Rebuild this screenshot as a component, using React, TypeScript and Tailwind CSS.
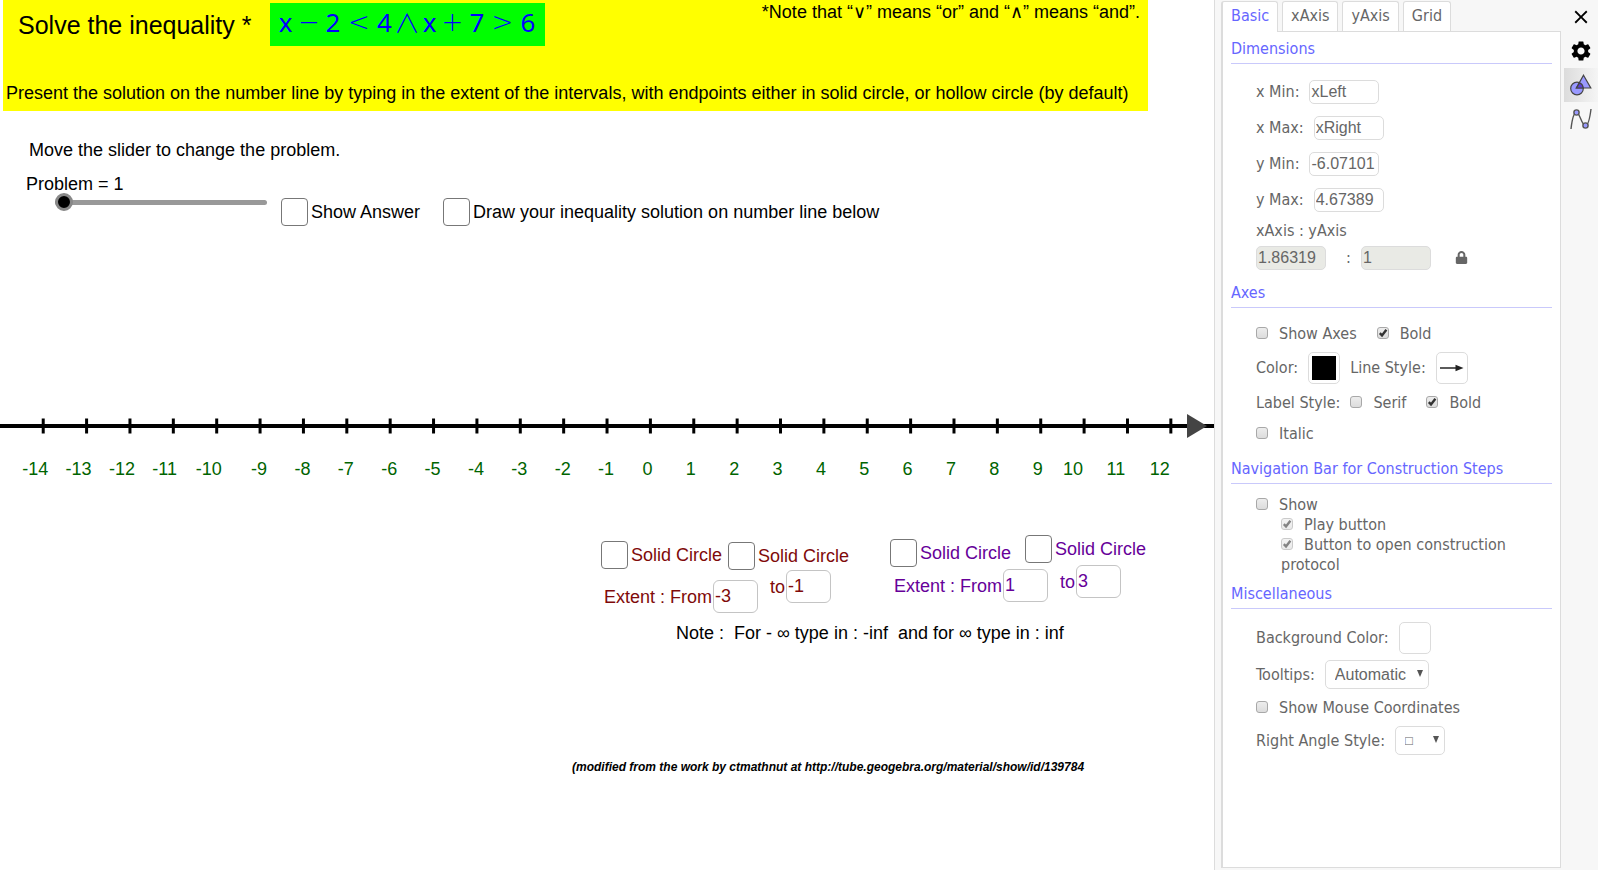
import React, { useState } from 'react';
import { MdClose, MdSettings } from 'react-icons/md';
import { FaLock } from 'react-icons/fa';

const TICKS = Array.from({ length: 27 }, (_, i) => i - 14);

const tickX = (n: number) => 650.4 + n * 43.37;

// two-digit labels start further left of their tick
const labelX = (n: number) => {
  if (Math.abs(n) >= 10) return tickX(n) - 21;
  return tickX(n) - (n < 0 ? 9 : 8);
};

const TABS = ['Basic', 'xAxis', 'yAxis', 'Grid'];

interface BigCheckProps {
  label: string;
  className?: string;
}

const BigCheck: React.FC<BigCheckProps> = ({ label, className }) => (
  <label className={`absolute flex items-center gap-[3px] whitespace-nowrap ${className}`}>
    <input
      type="checkbox"
      className="h-7 w-[27px] appearance-none rounded-[4px] border border-[#777] bg-white checked:bg-[#777]"
    />
    {label}
  </label>
);

interface ExtentProps {
  label: string;
  value: string;
  className?: string;
}

const Extent: React.FC<ExtentProps> = ({ label, value, className }) => (
  <label className={`absolute flex items-center gap-px whitespace-nowrap ${className}`}>
    {label}
    <input
      type="text"
      defaultValue={value}
      className="h-[33px] w-[45px] rounded-[6px] border border-[#c4c4c4] bg-white pl-px"
    />
  </label>
);

const NumberLine = () => (
  <svg className="absolute left-0 top-[410px] h-[80px] w-full" role="img" aria-label="Number line">
    <line x1="0" y1="16" x2="100%" y2="16" stroke="#000" strokeWidth="4" />
    {TICKS.map((n) => (
      <g key={n}>
        <line x1={tickX(n)} y1="8.5" x2={tickX(n)} y2="23.5" stroke="#000" strokeWidth="3" />
        <text x={labelX(n)} y="65" fill="#006400">{n}</text>
      </g>
    ))}
    <path d="M1187 4 L1207 16 L1187 28 Z" fill="#444" />
  </svg>
);

const OPERATORS = ['−', '<', '+', '>'];

const FORMULA: [string, string][] = [
  ['x', 'w-[13px]'],
  ['−', 'w-[34px]'],
  ['2', 'w-[14px]'],
  ['<', 'w-[38px]'],
  ['4', 'w-[13px]'],
  ['∧', 'w-[32px]'],
  ['x', 'w-[13px]'],
  ['+', 'w-[33px]'],
  ['7', 'w-[16px]'],
  ['>', 'w-[35px]'],
  ['6', 'w-[16px]'],
];

const symbolFont = (s: string) => {
  if (s === '∧') return "font-['Noto_Sans_CJK_JP',sans-serif] font-light";
  if (OPERATORS.includes(s)) return "font-['DejaVu_Sans_Light','DejaVu_Sans',sans-serif] font-extralight";
  return '';
};

const Banner = () => (
  <header className="relative ml-[3px] mr-[66px] flex h-[111px] flex-col justify-between bg-[#ffff00] pb-[6px] pl-[3px]">
    <div className="flex items-start justify-between pr-2">
      <div className="flex">
        <h1 className="w-[264px] pl-3 pt-[10px] text-[25px] leading-[30px]">Solve the inequality *</h1>
        <p className="mt-[3px] flex h-[43px] bg-[#00ff00] px-[9px] font-['Noto_Sans',sans-serif] text-[26px] leading-[38px] text-[#0000ff]">
          {FORMULA.map(([s, w], i) => (
            <span key={i} className={`${w} flex justify-center ${symbolFont(s)}`}>{s}</span>
          ))}
        </p>
      </div>
      <p>*Note that “∨” means “or” and “∧” means “and”.</p>
    </div>
    <p className="whitespace-nowrap">
      Present the solution on the number line by typing in the extent of the intervals, with endpoints either in solid circle, or hollow circle (by default)
    </p>
  </header>
);

const GraphicsView = () => {
  const [problem, setProblem] = useState(1);

  return (
    <main className="relative min-w-0 flex-1 overflow-hidden border-r border-[#dcdcdc] bg-white font-['Liberation_Sans',Arial,sans-serif] text-[18px] leading-6 text-black">
      <Banner />

      <p className="absolute left-[29px] top-[138px]">Move the slider to change the problem.</p>
      <label htmlFor="problem" className="absolute left-[26px] top-[172px]">Problem = {problem}</label>
      <input
        id="problem"
        type="range"
        min={1}
        max={10}
        value={problem}
        onChange={(e) => setProblem(Number(e.target.value))}
        className="absolute left-[55px] top-[193px] h-[18px] w-[212px] appearance-none bg-transparent [&::-webkit-slider-runnable-track]:h-[5px] [&::-webkit-slider-runnable-track]:rounded-full [&::-webkit-slider-runnable-track]:bg-[#999] [&::-webkit-slider-thumb]:-mt-[7px] [&::-webkit-slider-thumb]:size-[18px] [&::-webkit-slider-thumb]:appearance-none [&::-webkit-slider-thumb]:rounded-full [&::-webkit-slider-thumb]:border-3 [&::-webkit-slider-thumb]:border-[#888] [&::-webkit-slider-thumb]:bg-black"
      />
      <BigCheck label="Show Answer" className="left-[281px] top-[198px]" />
      <BigCheck label="Draw your inequality solution on number line below" className="left-[443px] top-[198px]" />

      <NumberLine />

      {/* first interval */}
      <BigCheck label="Solid Circle" className="left-[601px] top-[541px] text-[#7f0a0a]" />
      <BigCheck label="Solid Circle" className="left-[728px] top-[542px] text-[#7f0a0a]" />
      <Extent label="Extent : From" value="-3" className="left-[604px] top-[580px] text-[#7f0a0a]" />
      <Extent label="to" value="-1" className="left-[770px] top-[570px] text-[#7f0a0a]" />

      {/* second interval */}
      <BigCheck label="Solid Circle" className="left-[890px] top-[539px] text-[#660099]" />
      <BigCheck label="Solid Circle" className="left-[1025px] top-[535px] text-[#660099]" />
      <Extent label="Extent : From" value="1" className="left-[894px] top-[569px] text-[#660099]" />
      <Extent label="to" value="3" className="left-[1060px] top-[565px] text-[#660099]" />

      <p className="absolute left-[676px] top-[621px] whitespace-pre">{'Note :  For - ∞ type in : -inf  and for ∞ type in : inf'}</p>
      <p className="absolute left-[572px] top-[755px] whitespace-nowrap text-[12px] font-bold italic">
        (modified from the work by ctmathnut at http://tube.geogebra.org/material/show/id/139784
      </p>
    </main>
  );
};

interface CheckProps {
  label: string;
  checked?: boolean;
  disabled?: boolean;
}

const Check: React.FC<CheckProps> = ({ label, checked, disabled }) => (
  <label>
    <span className={`relative mr-[11px] inline-block size-3 ${disabled ? 'opacity-60' : ''}`}>
      <input
        type="checkbox"
        defaultChecked={checked}
        disabled={disabled}
        className="peer block size-3 appearance-none rounded-[3px] border border-[#a8a8a8] bg-linear-to-b from-[#ededed] to-[#dcdcdc]"
      />
      <svg viewBox="0 0 12 12" className="pointer-events-none absolute inset-0 hidden size-3 peer-checked:block">
        <path d="M2.8 6.2 L5 8.4 L9.4 2.8" fill="none" stroke="#333" strokeWidth="2.4" />
      </svg>
    </span>
    {label}
  </label>
);

interface FieldProps {
  label: string;
  value: string;
}

const Field: React.FC<FieldProps> = ({ label, value }) => (
  <label className="flex h-6 items-center gap-[10px]">
    {label}
    <input
      type="text"
      defaultValue={value}
      className="h-6 w-[70px] rounded-[5px] border border-[#dcdcdc] pl-px font-['Liberation_Sans',Arial,sans-serif]"
    />
  </label>
);

const Heading = ({ children }: { children: React.ReactNode }) => (
  <h2 className="h-[26px] border-b border-[#c9c9fb] leading-[22px] text-[#6666ff]">{children}</h2>
);

const DropArrow = () => (
  <svg viewBox="0 0 6 7" className="pointer-events-none absolute right-[6px] top-[10px] h-[7px] w-[6px] fill-[#555]">
    <path d="M0 0 H6 L3 7 Z" />
  </svg>
);

const SELECT = "h-[29px] appearance-none rounded-[5px] border border-[#dcdcdc] bg-white pl-[9px] font-['Liberation_Sans',Arial,sans-serif]";

const SettingsPanel = () => {
  const [tab, setTab] = useState('Basic');

  return (
    <aside className="flex w-[340px] shrink-0 flex-col pb-[2px] pt-px">
      <div role="tablist" className="flex h-[30px] gap-1">
        {TABS.map((t) => (
          <button
            key={t}
            role="tab"
            aria-selected={t === tab}
            onClick={() => setTab(t)}
            className={`rounded-t-[3px] border-x border-t border-[#dcdcdc] bg-white px-2 ${t === tab ? 'relative z-10 -mb-px border-l-2 pb-[3px] text-[#6666ff]' : 'pb-[2px]'}`}
          >
            {t}
          </button>
        ))}
      </div>

      <div className="flex-1 border border-l-2 border-[#dcdcdc] bg-white px-2 pt-[6px]">
        <Heading>Dimensions</Heading>
        <div className="mt-4 flex flex-col gap-3 pl-[25px]">
          <Field label="x Min:" value="xLeft" />
          <Field label="x Max:" value="xRight" />
          <Field label="y Min:" value="-6.07101" />
          <Field label="y Max:" value="4.67389" />
        </div>
        <div className="mb-3 mt-[9px] pl-[25px]">
          <p>xAxis : yAxis</p>
          <div className="mt-[5px] flex h-6 items-center">
            <input
              disabled
              aria-label="xAxis ratio"
              defaultValue="1.86319"
              className="h-6 w-[70px] rounded-[5px] border border-[#dcdcdc] bg-[#e9eae5] pl-px font-['Liberation_Sans',Arial,sans-serif]"
            />
            <span className="w-[35px] pl-5">:</span>
            <input
              disabled
              aria-label="yAxis ratio"
              defaultValue="1"
              className="h-6 w-[70px] rounded-[5px] border border-[#dcdcdc] bg-[#e9eae5] pl-px font-['Liberation_Sans',Arial,sans-serif]"
            />
            <button aria-label="Lock ratio" className="mb-[2px] ml-6">
              <FaLock size={13} />
            </button>
          </div>
        </div>

        <Heading>Axes</Heading>
        <div className="mb-[14px] mt-4 pl-[25px]">
          <div className="flex gap-5">
            <Check label="Show Axes" />
            <Check label="Bold" checked />
          </div>
          <div className="mt-2 flex items-center gap-[10px]">
            <span>Color:</span>
            <button aria-label="Color" className="flex size-8 items-center justify-center rounded-[5px] border border-[#dcdcdc]">
              <span className="size-6 bg-black" />
            </button>
            <span>Line Style:</span>
            <button aria-label="Line Style" className="flex size-8 items-center justify-center rounded-[5px] border border-[#dcdcdc]">
              <svg viewBox="0 0 24 8" className="h-2 w-6">
                <path d="M0 4 H17" stroke="#333" strokeWidth="1.6" />
                <path d="M15.5 0.8 L23.5 4 L15.5 7.2 Z" fill="#222" />
              </svg>
            </button>
          </div>
          <div className="mt-[9px] flex">
            <span className="mr-[10px]">Label Style:</span>
            <span className="mr-5"><Check label="Serif" /></span>
            <Check label="Bold" checked />
          </div>
          <div className="mt-[11px]"><Check label="Italic" /></div>
        </div>

        <Heading>Navigation Bar for Construction Steps</Heading>
        <div className="mb-2 mt-[11px] pl-[25px]">
          <Check label="Show" />
          <div className="pl-[25px]"><Check label="Play button" checked disabled /></div>
          <div className="pl-[25px]"><Check label="Button to open construction protocol" checked disabled /></div>
        </div>

        <Heading>Miscellaneous</Heading>
        <div className="mt-[13px] pl-[25px]">
          <div className="flex items-center gap-[10px]">
            <span>Background Color:</span>
            <button aria-label="Background Color" className="size-8 rounded-[5px] border border-[#dcdcdc]" />
          </div>
          <div className="mt-[6px] flex items-center gap-[10px]">
            <label htmlFor="tooltips">Tooltips:</label>
            <span className="relative">
              <select id="tooltips" className={`${SELECT} w-[104px]`}>
                <option>Automatic</option>
                <option>On</option>
                <option>Off</option>
              </select>
              <DropArrow />
            </span>
          </div>
          <div className="mt-[9px]"><Check label="Show Mouse Coordinates" /></div>
          <div className="mt-2 flex items-center gap-[10px]">
            <label htmlFor="angle">Right Angle Style:</label>
            <span className="relative">
              <select id="angle" className={`${SELECT} w-[50px] text-[13px]`}>
                <option>□</option>
                <option>∟</option>
              </select>
              <DropArrow />
            </span>
          </div>
        </div>
      </div>
    </aside>
  );
};

const Toolbar = () => (
  <nav className="ml-[3px] flex w-[34px] shrink-0 flex-col text-black">
    <button aria-label="Close" className="flex h-[34px] items-center justify-center">
      <MdClose size={22} />
    </button>
    <button aria-label="Settings" className="flex h-[34px] items-center justify-center">
      <MdSettings size={24} />
    </button>
    <button aria-label="Graphics" className="flex h-[34px] items-center justify-center bg-linear-to-r from-[#dcdcdc] to-[#f5f5f5]">
      <svg viewBox="0 0 22 22" className="size-[22px]" stroke="#444" strokeWidth="1.2">
        <circle cx="7" cy="14.5" r="6.3" fill="#9999ff" />
        <path d="M13.5 1.2 L20.8 14 H6.4 Z" fill="#9999ff" />
        <path d="M9.6 8.8 Q13 10.5 13.3 14 H6.5 Z" fill="#5b3fd6" />
      </svg>
    </button>
    <button aria-label="Functions" className="flex h-[34px] items-center justify-center">
      <svg viewBox="0 0 22 22" className="size-[22px]" stroke="#555" strokeWidth="1.4" fill="none">
        <path d="M1 21 C2 12 3.5 4.5 6.5 4.5 C10 4.5 11.5 17.5 15.5 17.5 C18.5 17.5 20 9 21 1" />
        <circle cx="6.5" cy="4.5" r="2.6" fill="#9999ff" />
        <circle cx="15.5" cy="17.5" r="2.6" fill="#9999ff" />
      </svg>
    </button>
  </nav>
);

export default function App() {
  return (
    <div className="flex min-h-screen border-r-2 border-white bg-[#f7f7f7] font-['DejaVu_Sans_Condensed','DejaVu_Sans',sans-serif] text-[16px] leading-5 text-[#666]">
      <GraphicsView />
      <div className="w-[6px] shrink-0" />
      <SettingsPanel />
      <Toolbar />
    </div>
  );
}
